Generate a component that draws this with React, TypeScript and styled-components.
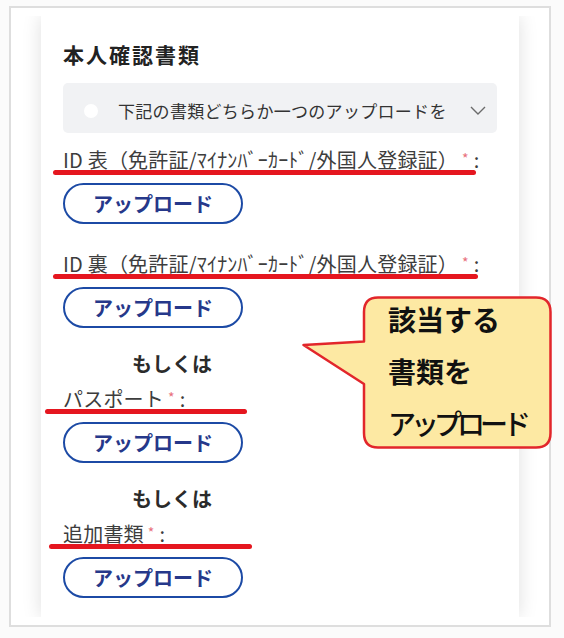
import React from "react";
import styled, { createGlobalStyle } from "styled-components";

const GlobalStyle = createGlobalStyle`
  html, body {
    margin: 0;
    padding: 0;
    background: #fbfbfb;
    font-family: "Noto Sans CJK JP", "Noto Sans", sans-serif;
  }
`;

type Doc = { label: string; markLeft: number; markWidth: number; gap: number; or?: boolean };

const docs: Doc[] = [
  { label: "ID 表（免許証/ﾏｲﾅﾝﾊﾞｰｶｰﾄﾞ/外国人登録証）", markLeft: -10, markWidth: 423, gap: 15 },
  { label: "ID 裏（免許証/ﾏｲﾅﾝﾊﾞｰｶｰﾄﾞ/外国人登録証）", markLeft: -10, markWidth: 425, gap: 28 },
  { label: "パスポート", markLeft: -18, markWidth: 202, gap: 11, or: true },
  { label: "追加書類", markLeft: -14, markWidth: 203, gap: 11, or: true },
];

export default function App() {
  return (
    <>
      <GlobalStyle />
      <Frame>
        <Shot>
          <Card>
            <Heading>本人確認書類</Heading>
            <Notice>
              <InfoDot />
              <NoticeText>下記の書類どちらか一つのアップロードを</NoticeText>
              <svg width="16" height="9" viewBox="0 0 16 9">
                <path d="M1 1 L8 8 L15 1" fill="none" stroke="#6b6b6b" strokeWidth="1.4" />
              </svg>
            </Notice>
            {docs.map((d) => (
              <React.Fragment key={d.label}>
                {d.or && <Or>もしくは</Or>}
                <Field $gap={d.gap}>
                  <Label>
                    {d.label}
                    <Req>*</Req>:
                  </Label>
                  <Mark $left={d.markLeft} $width={d.markWidth} />
                  <UploadButton>アップロード</UploadButton>
                </Field>
              </React.Fragment>
            ))}
          </Card>
        </Shot>
        <Callout>
          <Balloon viewBox="0 0 250 153" width="250" height="153">
            <path
              d="M76 1.5 H234 Q248.5 1.5 248.5 16 V137 Q248.5 151.5 234 151.5 H76 Q62 151.5 62 137 V88 L1.5 49 L62 45.5 V16 Q62 1.5 76 1.5 Z"
              fill="#fde9a3"
              stroke="#e2262b"
              strokeWidth="2.5"
              strokeLinejoin="round"
            />
          </Balloon>
          <CalloutText>
            <CalloutLine>該当する</CalloutLine>
            <CalloutLine>書類を</CalloutLine>
            <CalloutLine $thin>アップロード</CalloutLine>
          </CalloutText>
        </Callout>
      </Frame>
    </>
  );
}

const Frame = styled.div`
  position: relative;
  box-sizing: border-box;
  margin: 6px 0 0 9px;
  width: 542px;
  height: 621px;
  border: 2px solid #dedede;
  background: #fff;
  padding: 8px 9px 8px 12px;
`;

const Shot = styled.div`
  height: 100%;
  overflow: hidden;
  padding: 0 21px 0 18px;
`;

const Card = styled.div`
  box-sizing: border-box;
  height: 100%;
  background: #fff;
  box-shadow: 0 0 18px rgba(0, 0, 0, 0.13);
  padding: 23px 22px 0 22px;
  display: flex;
  flex-direction: column;
  align-items: stretch;
`;

const Heading = styled.h2`
  margin: 0;
  font-size: 21px;
  line-height: 30px;
  font-weight: 700;
  letter-spacing: 2px;
  color: #222;
`;

const Notice = styled.div`
  margin-top: 14px;
  height: 50px;
  box-sizing: border-box;
  padding: 5px 11px 0 21px;
  background: #f1f2f4;
  border-radius: 5px;
  display: flex;
  align-items: center;
`;

const InfoDot = styled.span`
  width: 14px;
  height: 14px;
  border-radius: 50%;
  background: #fff;
  flex: none;
  margin-right: 20px;
`;

const NoticeText = styled.span`
  flex: 1;
  font-size: 17px;
  letter-spacing: 0.3px;
  color: #333;
  white-space: nowrap;
`;

const Field = styled.div<{ $gap: number }>`
  margin-top: ${(p) => p.$gap}px;
  display: flex;
  flex-direction: column;
  align-items: flex-start;
`;

const Label = styled.div`
  height: 24px;
  font-size: 20px;
  line-height: 24px;
  letter-spacing: 0.2px;
  color: #3d3d3d;
  white-space: nowrap;
`;

const Req = styled.span`
  color: #e86f7c;
  font-size: 14px;
  line-height: 1;
  vertical-align: 4px;
  margin: 0 5px 0 4px;
`;

const Mark = styled.div<{ $left: number; $width: number }>`
  margin-top: -2px;
  margin-left: ${(p) => p.$left}px;
  width: ${(p) => p.$width}px;
  height: 5px;
  border-radius: 3px;
  background: #e5161f;
`;

const UploadButton = styled.button`
  margin-top: 8px;
  box-sizing: border-box;
  width: 180px;
  height: 41px;
  border: 2.5px solid #1c4aa5;
  border-radius: 21px;
  background: #fff;
  font-family: "Noto Sans CJK JP", sans-serif;
  font-size: 20px;
  font-weight: 700;
  color: #26388a;
  padding: 0;
`;

const Or = styled.div`
  margin-top: 24px;
  padding-left: 69px;
  font-size: 20px;
  line-height: 24px;
  font-weight: 700;
  color: #2b2b2b;
`;

const Callout = styled.div`
  position: absolute;
  left: 291px;
  top: 288px;
  width: 250px;
  height: 153px;
`;

const Balloon = styled.svg`
  position: absolute;
  inset: 0;
`;

const CalloutText = styled.div`
  position: relative;
  margin-top: -3px;
  padding-left: 86px;
`;

const CalloutLine = styled.div<{ $thin?: boolean }>`
  font-size: 28px;
  line-height: 52px;
  font-weight: ${(p) => (p.$thin ? 500 : 700)};
  letter-spacing: ${(p) => (p.$thin ? "-5px" : "0")};
  color: #111;
  white-space: nowrap;
`;
